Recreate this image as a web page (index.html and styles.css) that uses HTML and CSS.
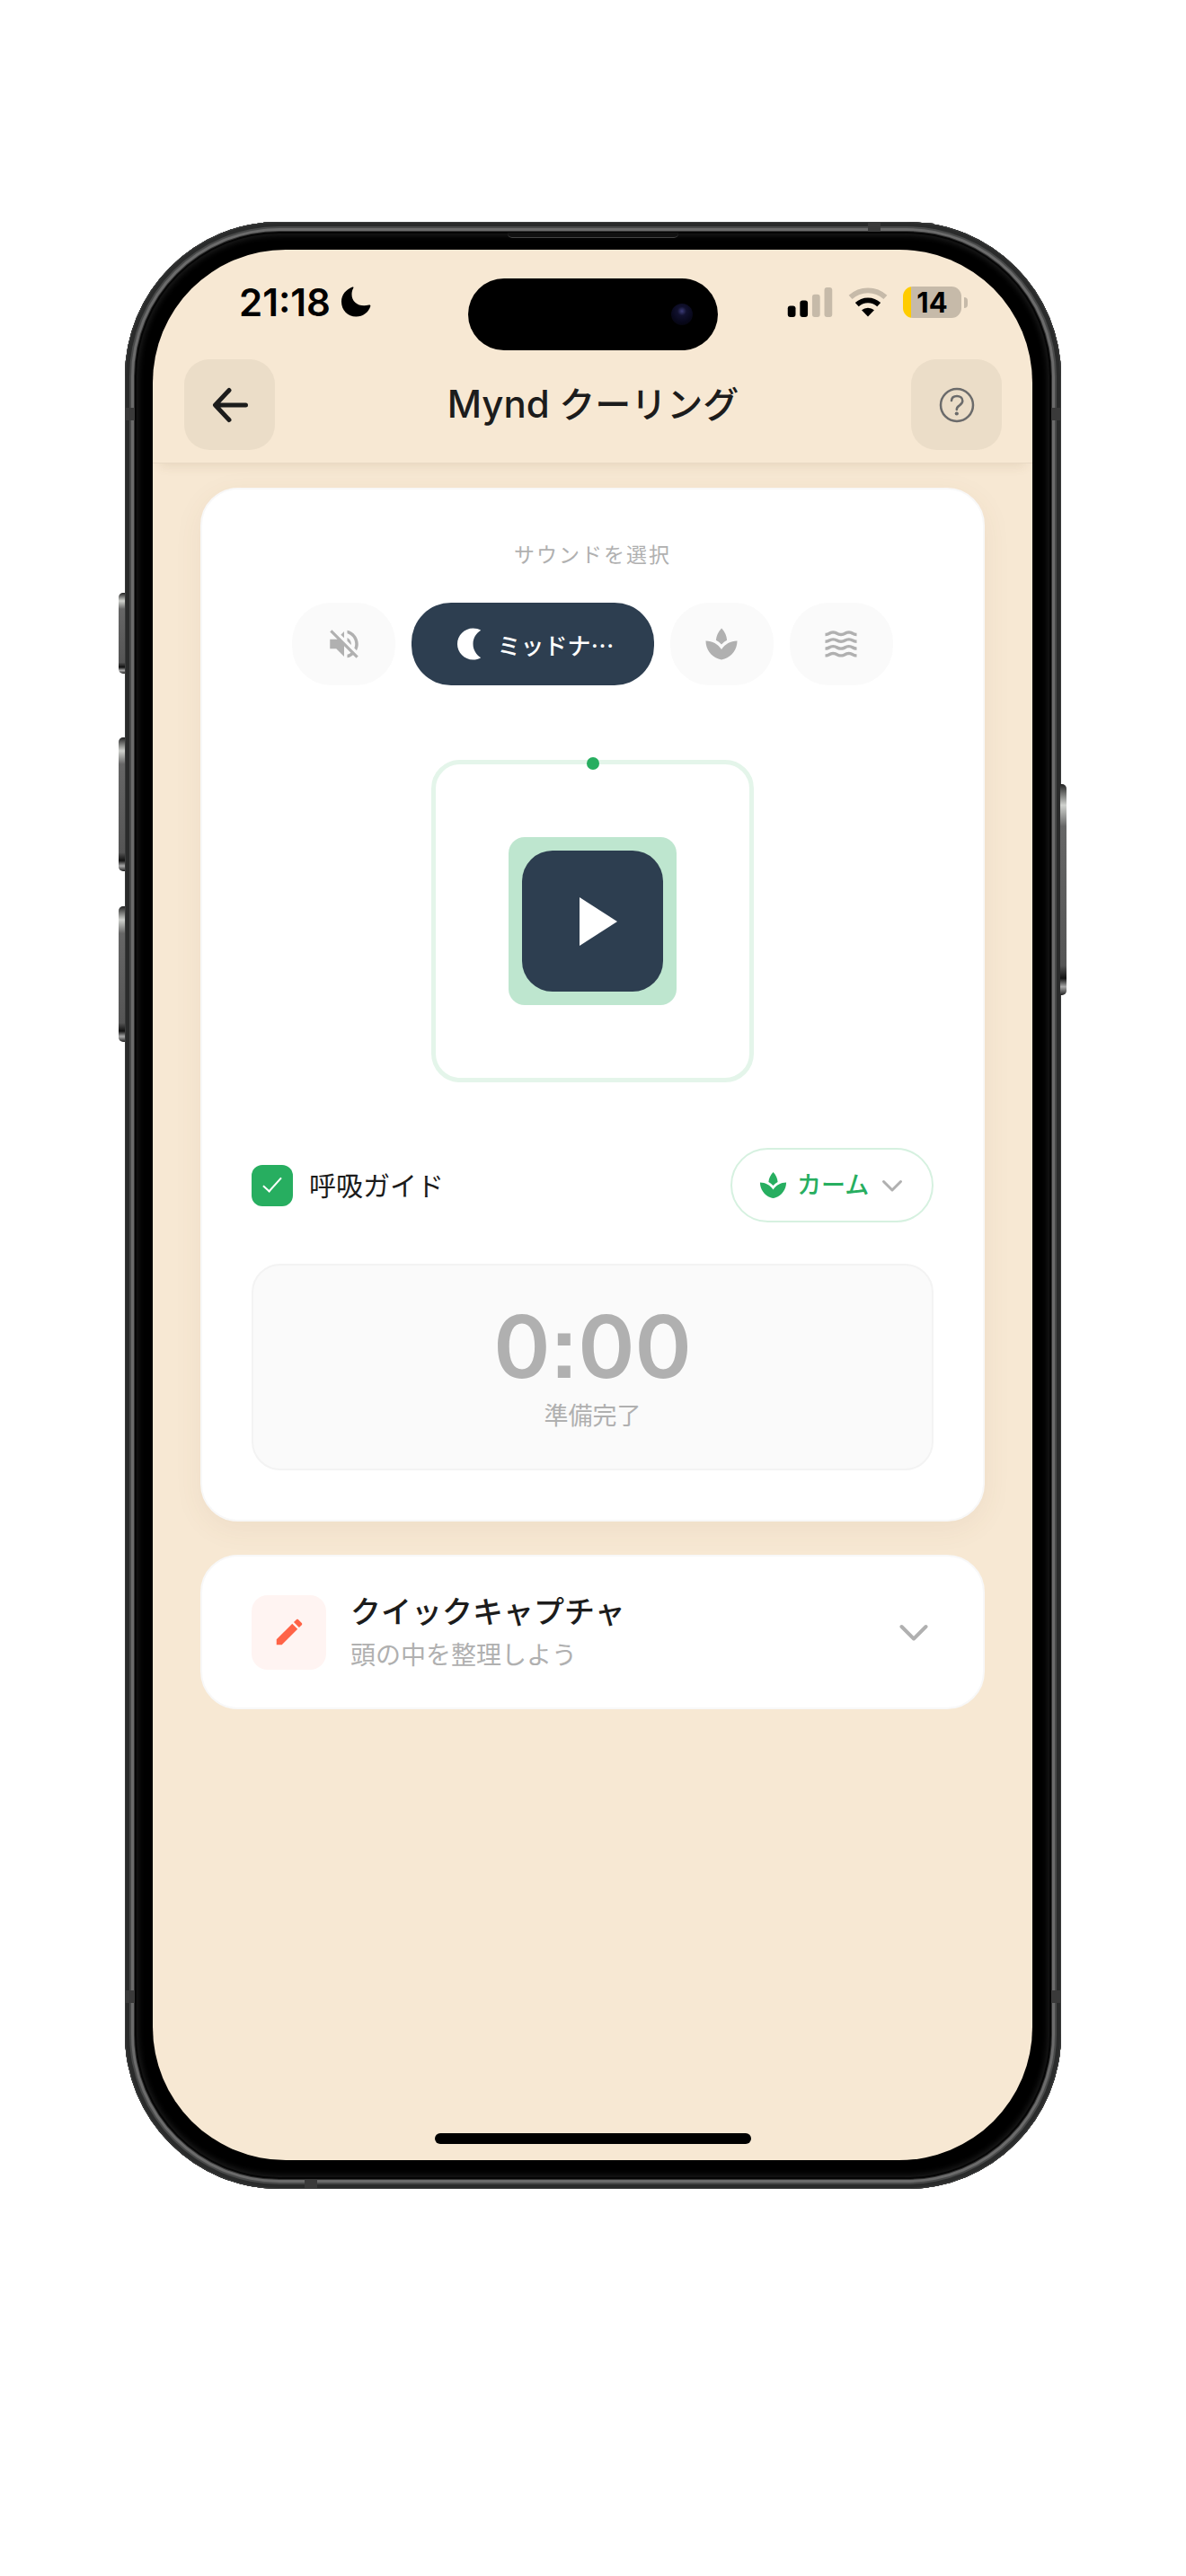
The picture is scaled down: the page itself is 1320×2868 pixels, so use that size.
FILE: index.html
```html
<!DOCTYPE html>
<html lang="ja">
<head>
	<meta charset="UTF-8">
	<meta name="viewport" content="width=device-width, initial-scale=1">
	<title>Mynd クーリング</title>
	<link rel="stylesheet" href="styles.css">
</head>
<body>
	<div class="phone">
		<i class="key key-action"></i>
		<i class="key key-up"></i>
		<i class="key key-down"></i>
		<i class="key key-power"></i>
		<i class="band band-top"></i>
		<i class="band band-left"></i>
		<i class="band band-right"></i>
		<i class="band band-left-low"></i>
		<i class="band band-right-low"></i>
		<i class="band band-bottom"></i>
		<i class="speaker"></i>
		<div class="screen">
			<div class="status">
				<div class="status-time">
					<span>21:18</span>
					<svg width="33" height="34" viewBox="0 0 33 34"><path d="M12.2.6C5 3.4 0 9.300 0 17c0 9.200 7 16.500 16.300 16.500 7.700 0 13.700-4.600 16-11.500.4-1.200-.5-1.900-1.600-1.500C20.500 23.500 11.300 18 11.500 8.500c0-2.600.7-4.800 1.700-6.500.6-1 .1-1.800-1-1.400z"/></svg>
				</div>
				<div class="island"><i class="camera"></i></div>
				<div class="status-icons">
					<svg width="51" height="33" viewBox="0 0 51 34">
						<rect x="0" y="21" width="9" height="13" rx="3"/>
						<rect x="14" y="15" width="9" height="19" rx="3"/>
						<rect class="dim" x="28" y="8" width="9" height="26" rx="3"/>
						<rect class="dim" x="42" y="0" width="9" height="34" rx="3"/>
					</svg>
					<svg width="44" height="33" viewBox="0 0 44 34">
						<path class="dim-line" d="M2 11.300a29.500 29.500 0 0 1 40 0"/>
						<path class="line" d="M9.400 19.800a18.500 18.500 0 0 1 25.200 0"/>
						<path d="M14.800 26a11 11 0 0 1 14.400 0L22 33.500z"/>
					</svg>
					<div class="battery"><span>14</span></div>
				</div>
			</div>

			<header class="header">
				<button class="header-btn" type="button" aria-label="戻る">
					<svg width="46" height="46" viewBox="0 0 46 46"><path class="back" d="M22 6.500 6.500 23 22 39.500M7 23h33.500"/></svg>
				</button>
				<h1><span class="latin">Mynd</span> クーリング</h1>
				<button class="header-btn" type="button" aria-label="ヘルプ">
					<svg width="40" height="40" viewBox="0 0 40 40">
						<circle class="help" cx="20" cy="20" r="18"/>
						<path class="help" d="M14 15c.2-3.200 2.800-5 6-5 3.300 0 6.300 1.900 6.300 5.200 0 2.800-1.600 4-3.400 5.200-1.900 1.200-3.100 2.300-3.100 4.600"/>
						<circle class="help-dot" cx="19.800" cy="29.500" r="2.100"/>
					</svg>
				</button>
			</header>

			<main class="content">
				<section class="card player">
					<h2>サウンドを選択</h2>
					<div class="sounds">
						<button class="chip" type="button" aria-label="オフ">
							<svg class="icon" viewBox="0 0 24 24"><path d="M16.500 12c0-1.770-1.020-3.290-2.500-4.030v2.210l2.450 2.450c.03-.2.05-.41.05-.63zm2.500 0c0 .94-.2 1.820-.54 2.640l1.510 1.510C20.630 14.910 21 13.500 21 12c0-4.280-2.990-7.860-7-8.770v2.060c2.890.86 5 3.540 5 6.710zM4.270 3 3 4.270 7.730 9H3v6h4l5 5v-6.730l4.250 4.250c-.67.52-1.420.93-2.250 1.180v2.060c1.380-.31 2.630-.95 3.690-1.810L19.730 21 21 19.730l-9-9L4.270 3zM12 4 9.910 6.090 12 8.180V4z"/></svg>
						</button>
						<button class="chip chip-on" type="button" aria-pressed="true">
							<svg class="icon" viewBox="0 0 24 24"><path d="M14 2c1.820 0 3.530.5 5 1.350-2.990 1.730-5 4.950-5 8.650s2.010 6.920 5 8.650C17.530 21.500 15.820 22 14 22 8.480 22 4 17.520 4 12S8.480 2 14 2z"/></svg>
							<span>ミッドナ…</span>
						</button>
						<button class="chip" type="button" aria-label="カーム">
							<svg class="icon" viewBox="0 0 24 24"><path d="M15.490 9.630c-.18-2.790-1.310-5.510-3.430-7.630-2.140 2.140-3.320 4.860-3.550 7.630 1.280.68 2.460 1.560 3.490 2.630 1.030-1.060 2.210-1.940 3.490-2.630zM12 15.450C9.850 12.170 6.180 10 2 10c0 5.320 3.360 9.820 8.030 11.490.63.23 1.290.4 1.970.51.68-.12 1.330-.29 1.970-.51C18.640 19.820 22 15.320 22 10c-4.180 0-7.850 2.170-10 5.450z"/></svg>
						</button>
						<button class="chip" type="button" aria-label="波">
							<svg class="icon" viewBox="0 0 24 24">
								<defs><path id="wave" d="M17 16.990c-1.350 0-2.200.42-2.950.8-.65.33-1.180.6-2.050.6-.9 0-1.400-.25-2.050-.6-.75-.38-1.570-.8-2.950-.8s-2.200.42-2.950.8c-.65.33-1.170.6-2.050.6v1.950c1.350 0 2.200-.42 2.950-.8.65-.33 1.170-.6 2.050-.6s1.400.25 2.050.6c.75.38 1.570.8 2.950.8s2.200-.42 2.950-.8c.65-.33 1.180-.6 2.050-.6.9 0 1.400.25 2.050.6.75.38 1.580.8 2.950.8v-1.950c-.9 0-1.400-.25-2.050-.6-.75-.38-1.600-.8-2.950-.8z"/></defs>
								<use href="#wave"/>
								<use href="#wave" y="-4.450"/>
								<use href="#wave" y="-8.900"/>
								<use href="#wave" y="-13.350"/>
							</svg>
						</button>
					</div>

					<div class="ring">
						<i class="ring-dot"></i>
						<div class="halo">
							<button class="play" type="button" aria-label="再生">
								<svg width="44" height="54" viewBox="0 0 44 54"><path d="M1 0v54l42-27z"/></svg>
							</button>
						</div>
					</div>

					<div class="guide">
						<label class="check"><input type="checkbox" checked><span>呼吸ガイド</span></label>
						<div class="mode">
							<svg class="mode-icon" viewBox="0 0 24 24"><path d="M15.490 9.630c-.18-2.790-1.310-5.510-3.430-7.630-2.140 2.140-3.320 4.860-3.550 7.630 1.280.68 2.460 1.560 3.490 2.630 1.030-1.060 2.210-1.940 3.490-2.630zM12 15.450C9.850 12.170 6.180 10 2 10c0 5.320 3.360 9.820 8.030 11.490.63.23 1.290.4 1.970.51.68-.12 1.330-.29 1.970-.51C18.640 19.820 22 15.320 22 10c-4.180 0-7.850 2.170-10 5.450z"/></svg>
							<select aria-label="呼吸モード"><option>カーム</option></select>
							<svg width="32" height="32" viewBox="0 0 32 32"><path class="chevron" d="m6.500 11.500 9.500 9.500 9.500-9.500"/></svg>
						</div>
					</div>

					<div class="timer">
						<strong>0:00</strong>
						<p>準備完了</p>
					</div>
				</section>

				<button class="card capture" type="button" aria-expanded="false">
					<span class="capture-icon">
						<svg width="38" height="38" viewBox="0 0 24 24"><path d="M3 17.250V21h3.750L17.810 9.940l-3.750-3.750L3 17.250zM20.710 7.040c.39-.39.39-1.020 0-1.410l-2.340-2.340c-.39-.39-1.020-.39-1.410 0l-1.830 1.830 3.750 3.750 1.830-1.830z"/></svg>
					</span>
					<span class="capture-text">
						<b>クイックキャプチャ</b>
						<small>頭の中を整理しよう</small>
					</span>
					<svg width="44" height="40" viewBox="0 0 44 40"><path class="chevron bold" d="M8.500 14 22 27.500 35.500 14"/></svg>
				</button>
			</main>
			<div class="home"></div>
		</div>
	</div>
</body>
</html>
```
FILE: styles.css
```css
*{margin:0;padding:0;box-sizing:border-box;}
body{background:#fff;padding:247px 20px 431px;font-family:Inter,"Noto Sans CJK JP",sans-serif;color:#1c1c1c;}
button,select{font-family:inherit;border:0;background:none;color:inherit;cursor:pointer;}
svg{display:block;flex:none;fill:currentColor;}

/* phone body */
.phone{position:relative;max-width:1042px;margin:0 auto;padding:31px 32px 32px 31px;border-radius:172px;background:#000;
	box-shadow:inset 0 0 0 1px #3a3b3b,inset 0 0 0 5px #2a2b2b,inset 0 0 0 7px #484949,inset 0 0 0 10px #6b6b6b,inset 0 0 0 11px #333,inset 0 0 0 13px #050505,inset 0 0 6px 15px #1c1c1c;}
.key{position:absolute;width:7px;border-radius:5px 0 0 5px;background:linear-gradient(#222,#d0d2ce 10%,#666 20%,#555 86%,#111 92%,#aaa 96%,#222);}
.key-action{left:-7px;top:413px;height:90px;}
.key-up{left:-7px;top:574px;height:149px;}
.key-down{left:-7px;top:762px;height:151px;}
.key-power{right:-6px;top:626px;height:235px;border-radius:0 5px 5px 0;}
.band{position:absolute;background:#3a3a3a;}
.band-top{top:1px;left:827px;width:14px;height:10px;}
.band-bottom{bottom:1px;left:200px;width:14px;height:10px;}
.band-left,.band-left-low{left:1px;width:10px;height:14px;}
.band-right,.band-right-low{right:1px;width:10px;height:14px;}
.band-left,.band-right{top:207px;}
.band-left-low,.band-right-low{bottom:207px;}
.speaker{position:absolute;top:12px;left:50%;width:190px;height:6px;margin-left:-95px;background:#111;border-bottom:1px solid #444;border-radius:0 0 5px 5px;}
.screen{display:flex;flex-direction:column;min-height:2127px;border-radius:148px;background:#f7e8d3;overflow:hidden;}

/* status bar */
.status{display:grid;grid-template-columns:1fr auto 1fr;height:122px;padding:32px 72px 0;}
.status-time,.status-icons{display:flex;align-items:center;height:52px;color:#000;}
.status-time{gap:12px;padding-left:24px;font-size:42px;font-weight:600;}
.status-icons{justify-content:flex-end;gap:17px;}
.dim{fill:#c6baa9;}
.line,.dim-line{fill:none;stroke:#000;stroke-width:6;}
.dim-line{stroke:#c6baa9;}
.island{display:flex;align-items:center;justify-content:flex-end;width:278px;height:80px;padding-right:28px;border-radius:40px;background:#000;}
.camera{width:24px;height:24px;border-radius:50%;background:radial-gradient(circle at 50% 35%,#3c3c78 0,#11112e 25%,#08081c 60%,#030306 100%);}
.battery{position:relative;width:65px;height:35px;margin-right:7px;border-radius:11px;background:linear-gradient(90deg,#fc0 9px,#c6baa9 9px);font-size:31px;font-weight:700;line-height:35px;text-align:center;}
.battery:after{content:"";position:absolute;right:-7px;top:12px;width:4px;height:12px;border-radius:0 4px 4px 0;background:#c6baa9;}

/* header */
.header{display:flex;align-items:center;justify-content:space-between;padding:0 34px 14px 35px;border-bottom:1px solid #e9dac5;box-shadow:0 10px 12px -8px rgba(120,90,50,.14);}
.header h1{font-size:40px;font-weight:500;line-height:60px;}
.latin{font-size:42px;}
.header-btn{display:flex;align-items:center;justify-content:center;width:101px;height:101px;border-radius:28px;background:#ebddc8;}
.back{fill:none;stroke:#1c1c1c;stroke-width:5;stroke-linecap:round;stroke-linejoin:round;}
.help{fill:none;stroke:#6b6b6b;stroke-width:2.500;stroke-linecap:round;}
.help-dot{fill:#6b6b6b;}

/* cards */
.content{display:flex;flex-direction:column;gap:37px;padding:27px 53px;}
.card{border:2px solid #f8f8f8;border-radius:42px;background:#fff;box-shadow:0 8px 32px rgba(120,90,50,.07);}
.player{display:flex;flex-direction:column;align-items:center;padding:58px 55px 55px;}
.player h2{font-size:23px;font-weight:400;line-height:30px;letter-spacing:2px;color:#b0b0b0;}
.sounds{display:flex;gap:18px;margin-top:38px;}
.chip{display:flex;align-items:center;justify-content:center;gap:9px;min-width:115px;height:92px;border-radius:44px;background:#fafafa;color:#b0b0b0;font:500 26px "Noto Sans CJK JP",sans-serif;}
.chip-on{padding:0 44px;background:#2d3e50;color:#fff;}
.icon{width:42px;height:42px;}

/* breathing ring */
.ring{position:relative;display:flex;align-items:center;justify-content:center;width:359px;height:359px;margin-top:83px;border:5px solid #e4f5ea;border-radius:32px;}
.ring-dot{position:absolute;top:-8px;left:50%;width:14px;height:14px;margin-left:-7px;border-radius:50%;background:#27ae60;}
.halo{padding:15px;border-radius:18px;background:#bee6cf;}
.play{display:flex;align-items:center;justify-content:center;width:157px;height:157px;padding-left:12px;border-radius:34px;background:#2d3e50;color:#fff;}

.guide{display:flex;align-items:center;justify-content:space-between;width:100%;margin-top:73px;}
.check{display:flex;align-items:center;gap:18px;font-size:30px;line-height:46px;}
.check input{appearance:none;display:grid;place-items:center;width:46px;height:46px;border-radius:12px;background:#27ae60;}
.check input:after{content:"";width:8px;height:19px;margin-top:-6px;border:solid #fff;border-width:0 2px 2px 0;transform:rotate(42deg);}
.mode{display:flex;align-items:center;gap:9px;height:83px;padding:0 28px;border:2px solid #d6f1e0;border-radius:42px;color:#27ae60;}
.mode-icon{width:35px;height:35px;}
.mode select{appearance:none;font-size:27px;font-weight:500;line-height:40px;}
.chevron{fill:none;stroke:#b0b0b0;stroke-width:3;stroke-linecap:round;stroke-linejoin:round;}
.bold{stroke-width:4;}

.timer{width:100%;margin-top:46px;padding:42px 20px 40px;border:2px solid #f3f3f3;border-radius:32px;background:#fafafa;text-align:center;color:#b0b0b0;}
.timer strong{display:block;font-size:96px;font-weight:600;line-height:96px;font-feature-settings:"ss07","calt" 0;}
.timer p{margin-top:12px;font-size:27px;line-height:36px;}

.capture{display:flex;align-items:center;padding:40px 55px;text-align:left;box-shadow:none;}
.capture-icon{display:flex;align-items:center;justify-content:center;width:83px;height:83px;border-radius:18px;background:#fff4f2;color:#ff6347;}
.capture-text{display:flex;flex-direction:column;flex:1;gap:8px;margin-left:27px;}
.capture b{font-size:34px;font-weight:500;line-height:44px;}
.capture small{font-size:28px;line-height:36px;color:#b0b0b0;}

.home{width:352px;height:12px;margin:auto auto 18px;border-radius:6px;background:#000;}
```
